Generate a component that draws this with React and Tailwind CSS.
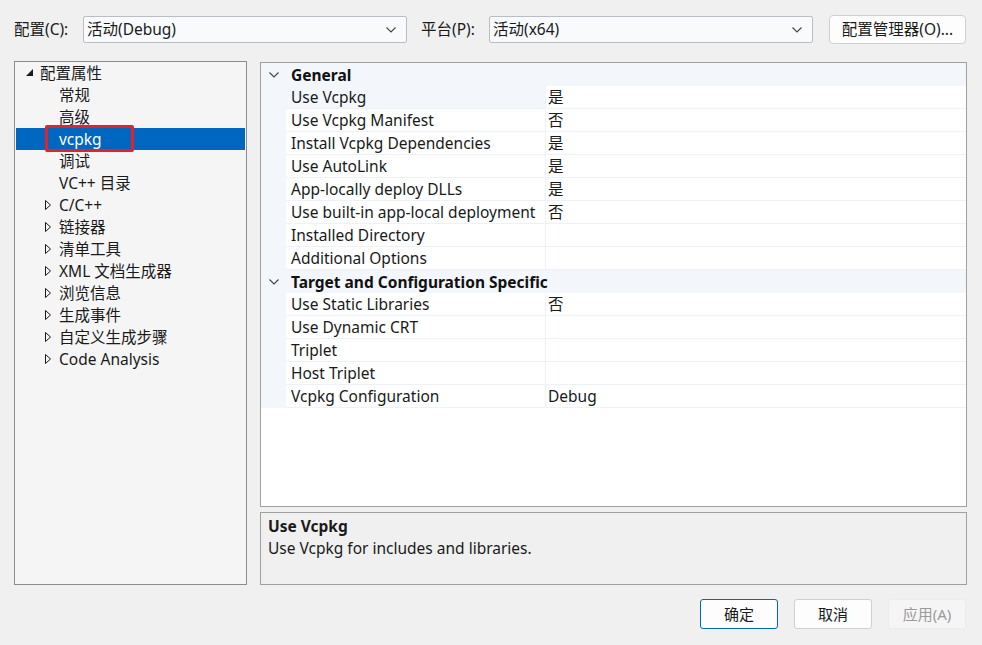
import React from "react";

const FONT = { fontFamily: '"Noto Sans", "Noto Sans CJK SC", sans-serif' };

function ChevronDown({ className = "" }) {
  return (
    <svg width="10" height="6" viewBox="0 0 10 6" className={className}>
      <path d="M0.5 0.5 L5 5 L9.5 0.5" fill="none" stroke="#444" strokeWidth="1.1" />
    </svg>
  );
}

function Combo({ text }) {
  return (
    <div className="w-[324px] h-[27px] border border-[#b9bec4] bg-[#f8fafc] rounded-[2px] flex items-center pl-[3px] pr-[10px]">
      <span className="flex-1 text-[15.5px] text-[#1a1a1a] leading-none">{text}</span>
      <ChevronDown />
    </div>
  );
}

const tree = [
  { label: "配置属性", level: 0, exp: true },
  { label: "常规", level: 1 },
  { label: "高级", level: 1 },
  { label: "vcpkg", level: 1, sel: true },
  { label: "调试", level: 1 },
  { label: "VC++ 目录", level: 1 },
  { label: "C/C++", level: 1, col: true },
  { label: "链接器", level: 1, col: true },
  { label: "清单工具", level: 1, col: true },
  { label: "XML 文档生成器", level: 1, col: true },
  { label: "浏览信息", level: 1, col: true },
  { label: "生成事件", level: 1, col: true },
  { label: "自定义生成步骤", level: 1, col: true },
  { label: "Code Analysis", level: 1, col: true },
];

function TreeRow({ item }) {
  return (
    <div className={`relative h-[22px] flex items-center ${item.sel ? "bg-[#0067c0] text-white" : "text-[#1a1a1a]"}`}>
      {item.level === 0 ? (
        <>
          <div className="w-[24px] flex justify-end pr-[6px]">
            <svg width="8" height="8" viewBox="0 0 8 8"><polygon points="7,0 7,7 0,7" fill="#1a1a1a" /></svg>
          </div>
          <span className="pt-[2px]">{item.label}</span>
        </>
      ) : (
        <>
          <div className="w-[43px] flex justify-end pr-[8px]">
            {item.col && (
              <svg width="6" height="10" viewBox="0 0 6 10"><polygon points="0.5,0.5 5.5,5 0.5,9.5" fill="none" stroke="#1a1a1a" strokeWidth="1" /></svg>
            )}
          </div>
          <span className="pt-[2px]">{item.label}</span>
        </>
      )}
      {item.sel && (
        <div className="absolute left-[29px] top-[-3px] w-[89px] h-[27px] border-[3px] border-[#e5222b] rounded-[2px]" />
      )}
    </div>
  );
}

const grid = [
  { h: "General" },
  { n: "Use Vcpkg", v: "是", sel: true },
  { n: "Use Vcpkg Manifest", v: "否" },
  { n: "Install Vcpkg Dependencies", v: "是" },
  { n: "Use AutoLink", v: "是" },
  { n: "App-locally deploy DLLs", v: "是" },
  { n: "Use built-in app-local deployment", v: "否" },
  { n: "Installed Directory", v: "" },
  { n: "Additional Options", v: "" },
  { h: "Target and Configuration Specific" },
  { n: "Use Static Libraries", v: "否" },
  { n: "Use Dynamic CRT", v: "" },
  { n: "Triplet", v: "" },
  { n: "Host Triplet", v: "" },
  { n: "Vcpkg Configuration", v: "Debug" },
];

function GridRow({ r }) {
  if (r.h) {
    return (
      <div className="h-[23px] flex items-center bg-[#f3f6fa]">
        <div className="w-[25px] flex justify-center">
          <ChevronDown />
        </div>
        <span className="pl-[5px] pt-[2px] font-bold text-[#111]">{r.h}</span>
      </div>
    );
  }
  return (
    <div className="h-[23px] flex bg-[#f3f6fa]">
      <div className="w-[25px]" />
      <div className={`w-[259px] flex items-center pl-[5px] pt-[2px] border-b border-[#eef2f8] ${r.sel ? "bg-[#f3f6fa]" : "bg-white"} text-[#1a1a1a] whitespace-nowrap overflow-hidden`}>
        {r.n}
      </div>
      <div className="flex-1 flex items-center pl-[2px] pt-[2px] bg-white border-b border-l border-[#eef2f8] text-[#1a1a1a]">
        {r.v}
      </div>
    </div>
  );
}

function Btn({ children, primary, disabled }) {
  return (
    <div
      className={`w-[78px] h-[30px] rounded-[3px] flex items-center justify-center text-[15px] ${
        primary
          ? "border border-[#0067c0] bg-[#fdfdfd] text-[#1a1a1a]"
          : disabled
          ? "border border-[#ececec] bg-[#f5f5f5] text-[#9a9a9a]"
          : "border border-[#d0d0d0] bg-[#fdfdfd] text-[#1a1a1a]"
      }`}
    >
      {children}
    </div>
  );
}

export default function App() {
  return (
    <div style={FONT} className="w-[982px] h-[645px] bg-[#f0f0f0] text-[15.5px] overflow-hidden flex flex-col">
      <div className="flex items-center h-[29px] mt-[15px] pl-[14px]">
        <span className="w-[69px] text-[#1a1a1a]">配置(C):</span>
        <Combo text="活动(Debug)" />
        <span className="ml-[14px] w-[68px] text-[#1a1a1a]">平台(P):</span>
        <Combo text="活动(x64)" />
        <div className="ml-[16px] w-[137px] h-[29px] border border-[#d0d0d0] rounded-[4px] bg-[#fdfdfd] flex items-center justify-center text-[#1a1a1a]">
          配置管理器(O)...
        </div>
      </div>
      <div className="flex mt-[17px] pl-[14px] gap-[13px] h-[524px]">
        <div className="w-[233px] h-[524px] border border-[#8c8c8c] bg-[#f5f5f5] px-[1px]">
          {tree.map((t, i) => (
            <TreeRow key={i} item={t} />
          ))}
        </div>
        <div className="w-[707px] flex flex-col">
          <div className="h-[447px] mt-[1px] border border-[#a0a0a0] bg-white">
            {grid.map((r, i) => (
              <GridRow key={i} r={r} />
            ))}
          </div>
          <div className="mt-[5px] h-[73px] border border-[#a0a0a0] bg-[#f0f0f0] pl-[7px] pt-[2px] text-[#1a1a1a]">
            <div className="font-bold leading-[22px]">Use Vcpkg</div>
            <div className="leading-[22px]">Use Vcpkg for includes and libraries.</div>
          </div>
        </div>
      </div>
      <div className="flex justify-end gap-[16px] pr-[16px] mt-[14px]">
        <Btn primary>确定</Btn>
        <Btn>取消</Btn>
        <Btn disabled>应用(A)</Btn>
      </div>
    </div>
  );
}
